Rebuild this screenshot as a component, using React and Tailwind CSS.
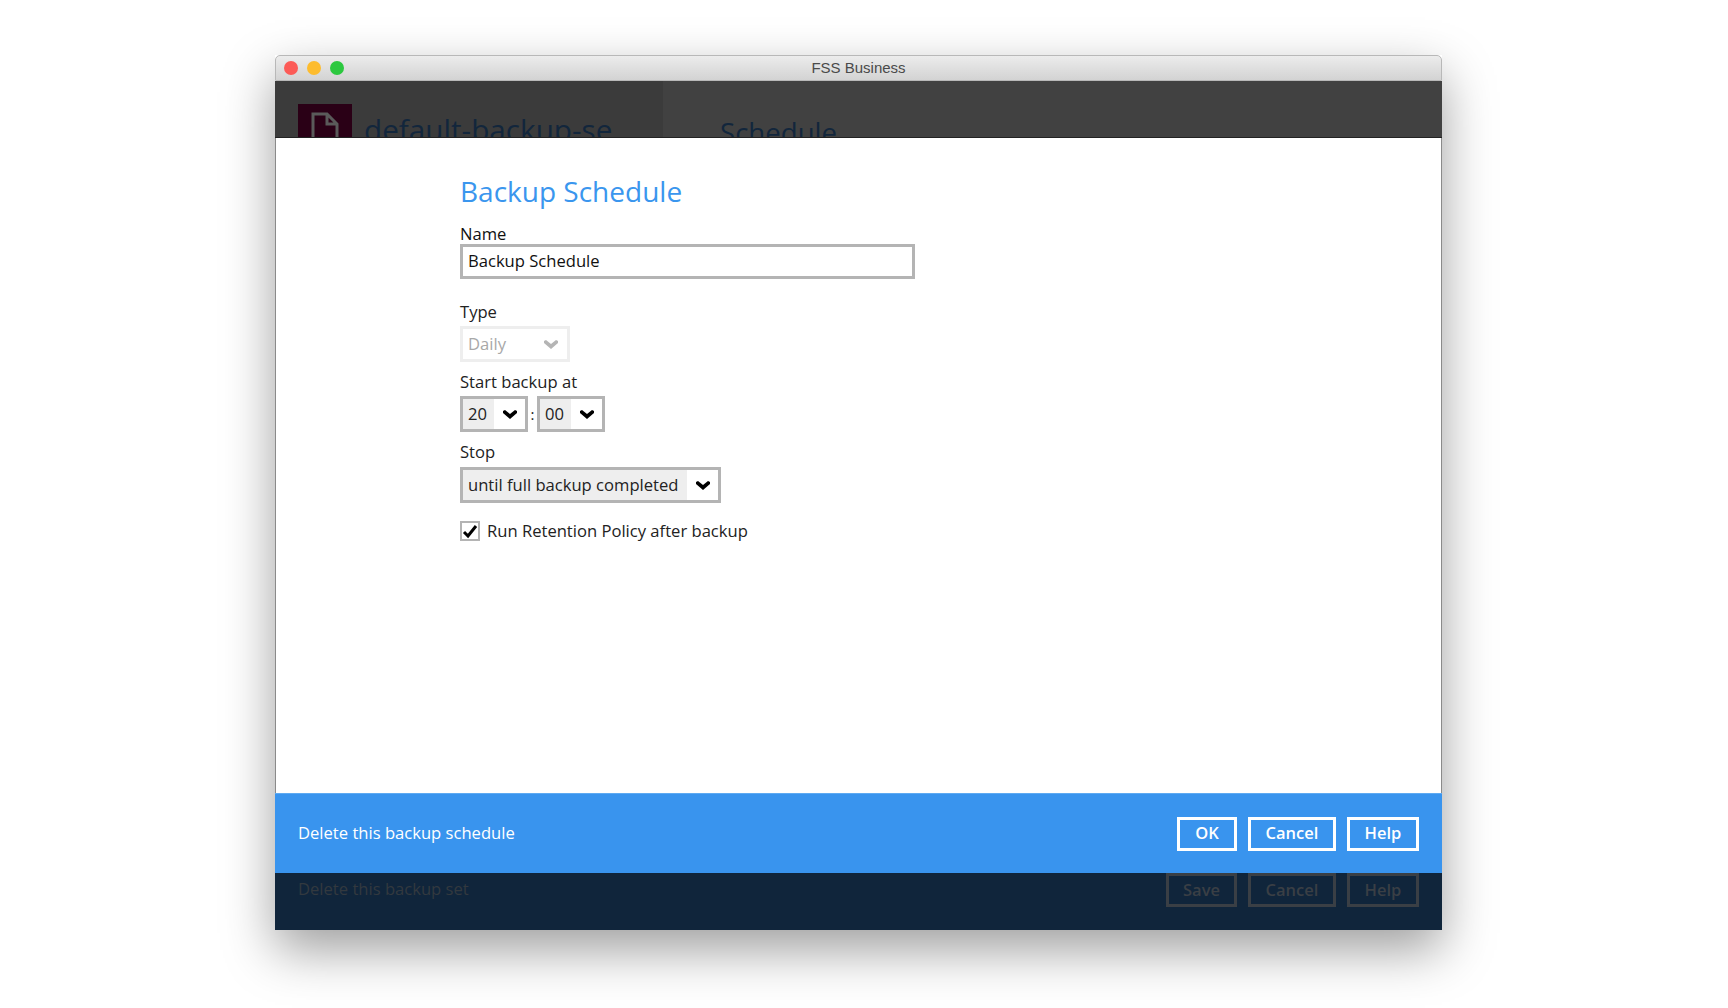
import React from "react";

const font = { fontFamily: '"Open Sans", "DejaVu Sans", sans-serif' };

function Chevron({ color = "#000", className = "" }) {
  return (
    <svg width="16" height="11" viewBox="0 0 16 11" className={className}>
      <path d="M1 2 L3 1 L8 5 L13 1 L15 2 L15 4 L8 10 L1 4 Z" fill={color} />
    </svg>
  );
}

function Select({ value, w, grey, disabled }) {
  return (
    <div className={`flex h-9 items-stretch border-[3px] bg-white text-[16.6px] ${disabled ? "border-[#eeeeee] text-[#a8a8a8]" : "border-[#b4b4b4] text-[#222]"} ${w}`}>
      <div className={`flex items-center whitespace-nowrap pl-[5px] ${grey} ${disabled ? "" : "bg-[#eeeeee]"}`}>{value}</div>
      <div className="flex flex-1 items-center justify-center">
        <Chevron color={disabled ? "#b5b5b5" : "#000"} />
      </div>
    </div>
  );
}

function FootBtn({ children, w, dim }) {
  return (
    <div className={`flex h-[34px] items-center justify-center border-[3px] text-[16.5px] font-semibold ${w} ${dim ? "border-[#3a3f45] text-[#3a3f45]" : "border-white text-white"}`}>
      {children}
    </div>
  );
}

export default function App() {
  return (
    <div className="h-[1008px] w-[1728px] overflow-hidden bg-white pl-[275px] pt-[55px]" style={font}>
      <div className="flex h-[875px] w-[1167px] flex-col shadow-[0_20px_48px_rgba(0,0,0,0.38)]">
        <div className="relative flex h-[26px] shrink-0 items-center justify-center rounded-t-[5px] border-x border-b border-t border-[#b8b8b8] bg-gradient-to-b from-[#ececec] to-[#d3d3d3]">
          <div className="absolute left-[8px] top-[5px] flex gap-[9px]">
            <span className="h-[14px] w-[14px] rounded-full bg-[#fc5b57]" />
            <span className="h-[14px] w-[14px] rounded-full bg-[#fdbc2e]" />
            <span className="h-[14px] w-[14px] rounded-full bg-[#2cc83f]" />
          </div>
          <span className="pt-px text-[15px] text-[#4a4a4a]" style={{ fontFamily: '"Liberation Sans", sans-serif' }}>FSS Business</span>
        </div>

        <div className="flex h-[57px] shrink-0 overflow-hidden border-b border-[#222] bg-[#414141]">
          <div className="flex w-[388px] gap-3 bg-[#3b3b3b] pl-[23px] pt-[23px]">
            <div className="flex h-[54px] w-[54px] shrink-0 justify-center bg-[#2a0016] pt-2">
              <svg width="28" height="38" viewBox="0 0 28 38" fill="none" stroke="#5a5a5a" strokeWidth="3">
                <path d="M2 2 H16 L26 12 V38 H2 Z M16 2 V12 H26" />
              </svg>
            </div>
            <span className="whitespace-nowrap pt-[6px] text-[29.7px] leading-[40px] text-[#12263c]">default-backup-se</span>
          </div>
          <span className="pl-[57px] pt-[31px] text-[27.6px] leading-[40px] text-[#12263c]">Schedule</span>
        </div>

        <div className="flex flex-1 flex-col border-x border-[#8a8a8a] bg-white pl-[184px] text-[#222]">
          <h1 className="mt-[35px] text-[28px] leading-[36px] text-[#3a96ee]">Backup Schedule</h1>
          <label className="mt-[15px] text-[16.6px] leading-[20px] text-[#111]">Name</label>
          <div className="flex h-[35px] w-[455px] items-center border-[3px] border-[#b4b4b4] pl-[5px] text-[16.6px] text-[#111]">Backup Schedule</div>

          <label className="mt-[23px] text-[16.6px] leading-[20px]">Type</label>
          <div className="mt-[4px]"><Select value="Daily" w="w-[110px]" grey="w-[72px]" disabled /></div>

          <label className="mt-[10px] text-[16.6px] leading-[20px]">Start backup at</label>
          <div className="mt-[4px] flex items-center">
            <Select value="20" w="w-[68px]" grey="w-[31px]" />
            <span className="w-[9px] text-center text-[15px]">:</span>
            <Select value="00" w="w-[68px]" grey="w-[31px]" />
          </div>

          <label className="mt-[10px] text-[16.6px] leading-[20px]">Stop</label>
          <div className="mt-[5px]"><Select value="until full backup completed" w="w-[261px]" grey="w-[224px]" /></div>

          <div className="mt-[16px] flex items-center gap-[7px]">
            <div className="flex h-5 w-5 items-center justify-center border-[2px] border-[#b4b4b4] bg-white">
              <svg width="16" height="15" viewBox="0 0 16 15"><path d="M2 8 L6 12 L14 2" fill="none" stroke="#000" strokeWidth="3" /></svg>
            </div>
            <span className="text-[16.6px]">Run Retention Policy after backup</span>
          </div>
        </div>

        <div className="flex h-[80px] shrink-0 items-center justify-between border-t border-[#5eaaf2] bg-[#3994ee] pl-[23px] pr-[23px] text-white">
          <span className="text-[16.6px]">Delete this backup schedule</span>
          <div className="flex gap-[11px]">
            <FootBtn w="w-[60px]">OK</FootBtn>
            <FootBtn w="w-[88px]">Cancel</FootBtn>
            <FootBtn w="w-[72px]">Help</FootBtn>
          </div>
        </div>

        <div className="flex h-[57px] shrink-0 items-start justify-between bg-[#10253b] pl-[23px] pr-[23px]">
          <span className="pt-[4px] text-[16.6px] text-[#33393f]">Delete this backup set</span>
          <div className="flex gap-[11px]">
            <FootBtn w="w-[71px]" dim>Save</FootBtn>
            <FootBtn w="w-[88px]" dim>Cancel</FootBtn>
            <FootBtn w="w-[72px]" dim>Help</FootBtn>
          </div>
        </div>
      </div>
    </div>
  );
}
